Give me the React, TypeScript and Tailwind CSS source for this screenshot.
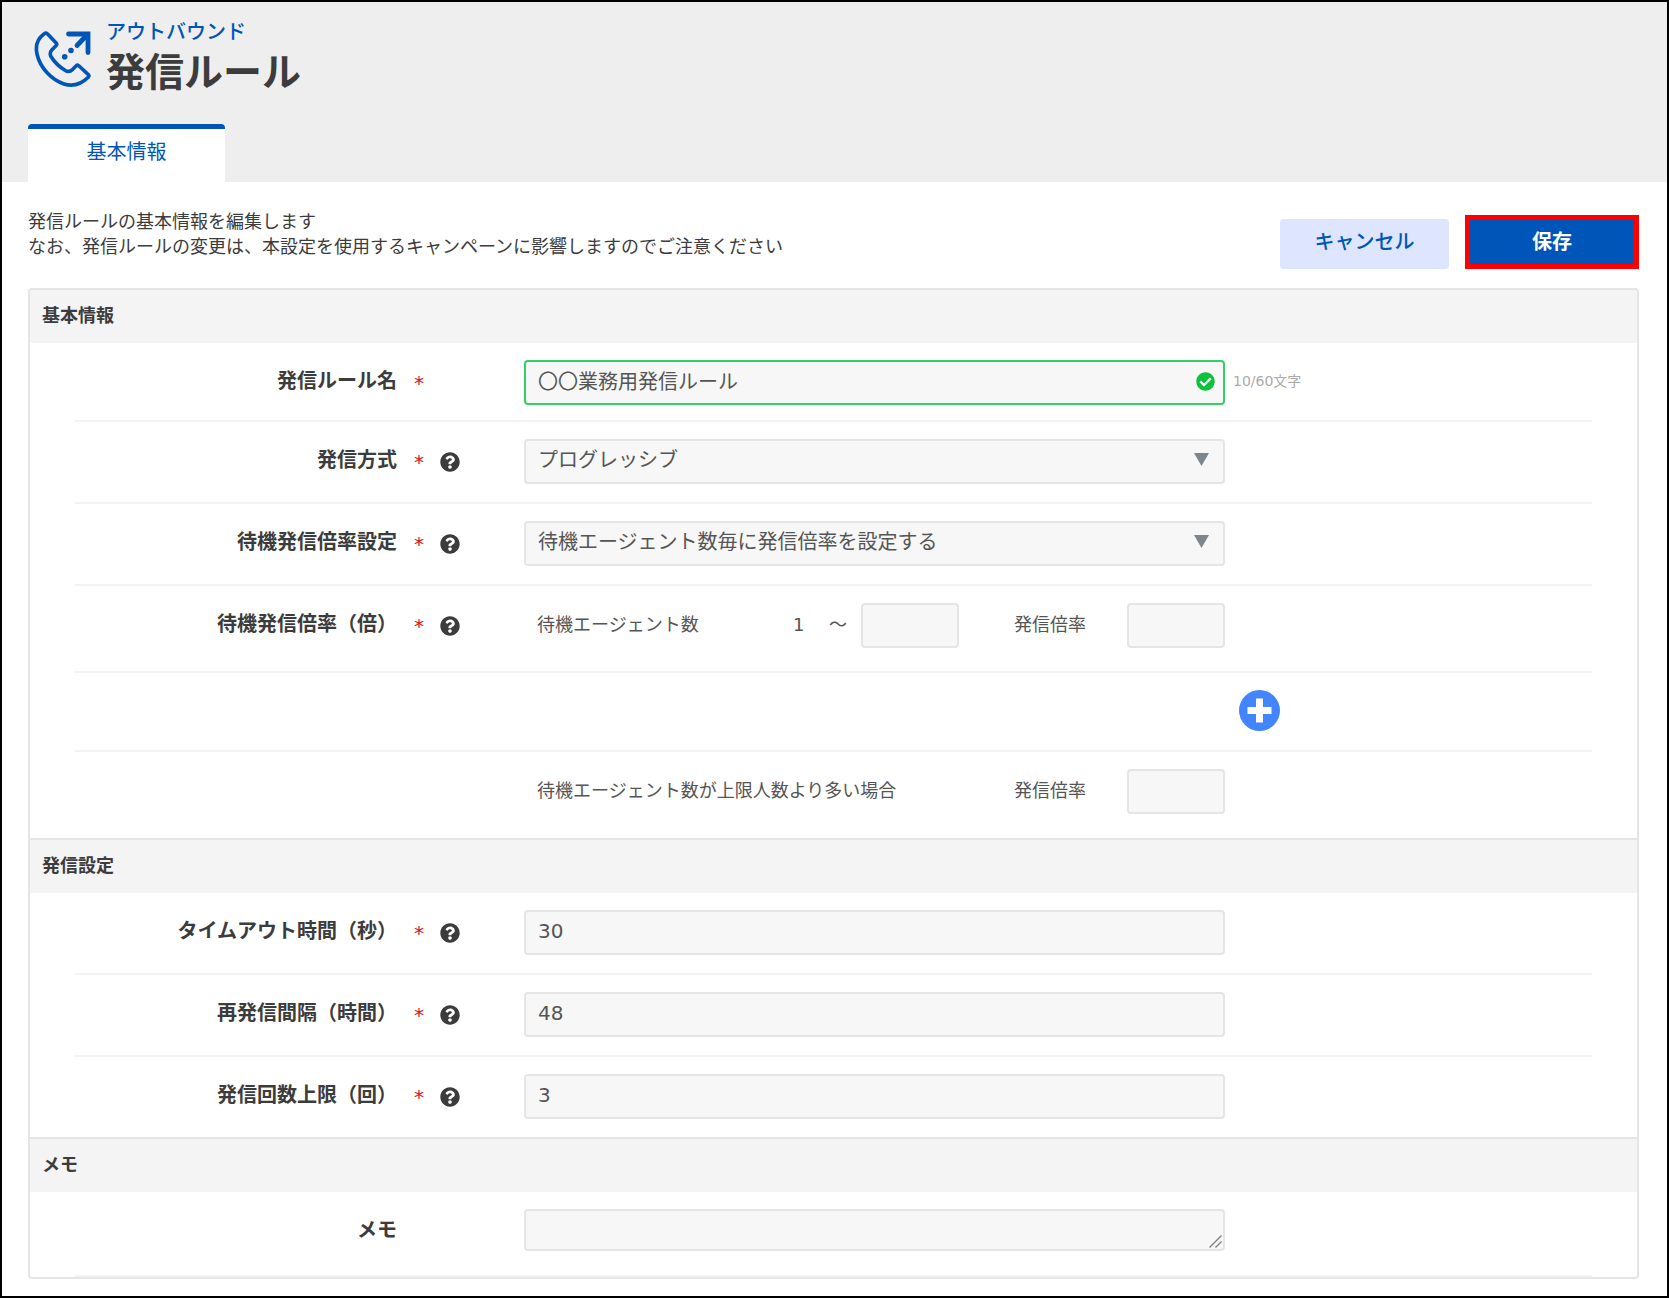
import { useState } from 'react';
import type { ReactNode } from 'react';
import { FaCheckCircle, FaQuestionCircle } from 'react-icons/fa';

const fieldClass =
  'block h-[45px] w-full rounded border-2 border-[#e5e5e5] bg-[#f7f7f7] px-3 pb-1 text-xl text-[#555555] outline-none';

function OutboundIcon() {
  return (
    <svg width="58" height="58" viewBox="0 0 58 58" fill="none" stroke="#0056b8" strokeLinecap="round" strokeLinejoin="round">
      <path
        d="M10 4 C3 9 1.5 17 3 24 C6 38 18 50 30 54 C38 56.5 47 54.5 54.5 47 Q55.5 45.7 54.3 44.6 L44.8 35.8 Q43.3 34.6 42 36 L38.5 39.6 Q35.5 42.4 31.8 40.8 C26 37.5 20 31.5 16.8 26.3 Q15.3 22.8 17.8 20 L22.2 15.6 Q23.3 14.3 22.2 13 L13.4 3.8 Q11.8 2.4 10 4 Z"
        strokeWidth="3.6"
      />
      <path d="M34.5 4 H54 V22.5" strokeWidth="4.8" strokeLinejoin="miter" />
      <path d="M53 5 L43 15.5" strokeWidth="4.8" />
      <path d="M37 20.5 h0.01 M30.7 26.8 h0.01" strokeWidth="5.6" />
    </svg>
  );
}

function SelectArrow() {
  return (
    <svg className="pointer-events-none absolute top-[14px] right-4" width="15" height="13" viewBox="0 0 15 13">
      <path d="M0 0H15L7.5 13Z" fill="#7d868c" />
    </svg>
  );
}

type SectionProps = {
  title: string;
  first?: boolean;
  children: ReactNode;
};

function Section({ title, first, children }: SectionProps) {
  return (
    <section className={first ? '' : 'border-t-2 border-[#e5e5e5]'}>
      <h2 className="flex h-[53px] items-center bg-[#f4f4f4] px-3 pb-0.5 text-lg font-bold text-[#3c3c3c]">{title}</h2>
      <div className="px-[45px]">{children}</div>
    </section>
  );
}

type RowProps = {
  label?: string;
  htmlFor?: string;
  required?: boolean;
  help?: boolean;
  className?: string;
  children: ReactNode;
};

function Row({ label, htmlFor, required, help, className = 'border-b-2 pb-[18px]', children }: RowProps) {
  return (
    <div className={`flex items-start border-[#f3f3f3] pt-[17px] ${className}`}>
      <div className="flex w-[449px] shrink-0 items-center">
        {label && (
          <label htmlFor={htmlFor} className="h-[45px] w-[322px] text-right text-xl leading-[42px] font-bold text-[#3c3c3c]">
            {label}
          </label>
        )}
        {required && <span className="ml-4 w-3 text-center text-xl text-[#dd1122]">*</span>}
        {help && (
          <button type="button" aria-label="ヘルプ" className="ml-[15px] text-[20px] text-[#3c3c3c]">
            <FaQuestionCircle />
          </button>
        )}
      </div>
      {children}
    </div>
  );
}

export default function App() {
  const [name, setName] = useState('〇〇業務用発信ルール');
  const [timeout, setTimeoutSec] = useState('30');
  const [interval, setIntervalHour] = useState('48');
  const [limit, setLimit] = useState('3');

  return (
    <div className="min-h-screen border-2 border-black bg-white font-['DejaVu_Sans','Noto_Sans_CJK_JP',sans-serif] text-[#3c3c3c]">
      {/* ヘッダー */}
      <header className="bg-[#eeeeee] px-[26px] pt-[18px]">
        <div className="flex">
          <div className="pt-[10px] pl-[6px]">
            <OutboundIcon />
          </div>
          <div className="ml-[14px]">
            <p className="text-xl leading-6 font-medium text-[#0056b8]">アウトバウンド</p>
            <h1 className="text-[39px] leading-[58px] font-bold">発信ルール</h1>
          </div>
        </div>
        <nav className="mt-[22px] flex">
          <a
            href="#basic"
            className="h-[58px] w-[197px] rounded-t border-t-[5px] border-[#0056b8] bg-white pt-[9px] text-center text-xl text-[#0056b8]"
          >
            基本情報
          </a>
        </nav>
      </header>

      <main className="pt-[27px] pr-7 pb-4 pl-[26px]">
        <div className="flex items-start justify-between">
          <p className="text-lg leading-[25px]">
            発信ルールの基本情報を編集します
            <br />
            なお、発信ルールの変更は、本設定を使用するキャンペーンに影響しますのでご注意ください
          </p>
          <div className="mt-1.5 flex items-end gap-4">
            <button type="button" className="h-[50px] w-[169px] rounded bg-[#dde5ff] pb-1 text-xl font-medium text-[#0056b8]">
              キャンセル
            </button>
            <button type="button" className="h-[54px] w-[174px] border-5 border-[#ff0000] bg-[#0056b8] text-xl font-bold text-white">
              保存
            </button>
          </div>
        </div>

        <form id="basic" className="mt-[19px] overflow-hidden rounded border-2 border-[#e5e5e5]">
          <Section title="基本情報" first>
            <Row label="発信ルール名" htmlFor="name" required className="border-b-2 pb-[15px]">
              <div className="relative max-w-[701px] flex-1">
                <input
                  id="name"
                  value={name}
                  onChange={(e) => setName(e.target.value)}
                  className="block h-[45px] w-full rounded border-2 border-[#34cf66] bg-[#f7f7f7] px-3 pb-1 text-xl text-[#555555] outline-none"
                />
                <FaCheckCircle className="absolute top-3 right-[10px] text-[19px] text-[#0ac23c]" />
              </div>
              <span className="ml-2 text-sm leading-[42px] text-[#aaaaaa]">10/60文字</span>
            </Row>
            <Row label="発信方式" htmlFor="method" required help>
              <div className="relative max-w-[701px] flex-1">
                <select id="method" className={`${fieldClass} appearance-none`}>
                  <option>プログレッシブ</option>
                </select>
                <SelectArrow />
              </div>
            </Row>
            <Row label="待機発信倍率設定" htmlFor="ratioMode" required help>
              <div className="relative max-w-[701px] flex-1">
                <select id="ratioMode" className={`${fieldClass} appearance-none`}>
                  <option>待機エージェント数毎に発信倍率を設定する</option>
                </select>
                <SelectArrow />
              </div>
            </Row>
            <Row label="待機発信倍率（倍）" htmlFor="agentMax" required help>
              <div className="flex h-[50px] max-w-[701px] flex-1 items-start text-lg leading-[43px] text-[#555555]">
                <span className="ml-[13px] w-[256px]">待機エージェント数</span>
                <span className="w-9">1</span>
                <span className="w-8">～</span>
                <input id="agentMax" aria-label="待機エージェント数の上限" className={`${fieldClass} max-w-[98px]`} />
                <label htmlFor="ratio" className="ml-auto w-[113px] shrink-0">発信倍率</label>
                <input id="ratio" className={`${fieldClass} max-w-[98px]`} />
              </div>
            </Row>
            <Row>
              <div className="flex h-[42px] max-w-[756px] flex-1 items-start justify-end">
                <button type="button" aria-label="追加">
                  <svg width="41" height="41" viewBox="0 0 41 41">
                    <circle cx="20.5" cy="20.5" r="20.5" fill="#4285ff" />
                    <path d="M20.5 8.5V32.5M8.5 20.5H32.5" stroke="#ffffff" strokeWidth="7" />
                  </svg>
                </button>
              </div>
            </Row>
            <Row className="pb-6">
              <div className="flex max-w-[701px] flex-1 items-start text-lg leading-[43px] text-[#555555]">
                <span className="ml-[13px]">待機エージェント数が上限人数より多い場合</span>
                <label htmlFor="ratioOver" className="ml-auto w-[113px] shrink-0">発信倍率</label>
                <input id="ratioOver" className={`${fieldClass} max-w-[98px]`} />
              </div>
            </Row>
          </Section>

          <Section title="発信設定">
            <Row label="タイムアウト時間（秒）" htmlFor="timeout" required help>
              <div className="max-w-[701px] flex-1">
                <input id="timeout" value={timeout} onChange={(e) => setTimeoutSec(e.target.value)} className={fieldClass} />
              </div>
            </Row>
            <Row label="再発信間隔（時間）" htmlFor="interval" required help>
              <div className="max-w-[701px] flex-1">
                <input id="interval" value={interval} onChange={(e) => setIntervalHour(e.target.value)} className={fieldClass} />
              </div>
            </Row>
            <Row label="発信回数上限（回）" htmlFor="limit" required help className="pb-[18px]">
              <div className="max-w-[701px] flex-1">
                <input id="limit" value={limit} onChange={(e) => setLimit(e.target.value)} className={fieldClass} />
              </div>
            </Row>
          </Section>

          <Section title="メモ">
            <Row label="メモ" htmlFor="memo" className="border-b-2 pb-[21px]">
              <div className="relative max-w-[701px] flex-1">
                <textarea
                  id="memo"
                  className="block h-[42px] w-full resize-none rounded border-2 border-[#e5e5e5] bg-[#f7f7f7] px-3 text-xl text-[#555555] outline-none"
                />
                <svg className="pointer-events-none absolute right-[3px] bottom-[3px]" width="13" height="13" viewBox="0 0 13 13">
                  <path d="M0.5 12.5L12.5 0.5M6.5 12.5L12.5 6.5" stroke="#808080" strokeWidth="1.4" />
                </svg>
              </div>
            </Row>
          </Section>
        </form>
      </main>
    </div>
  );
}
